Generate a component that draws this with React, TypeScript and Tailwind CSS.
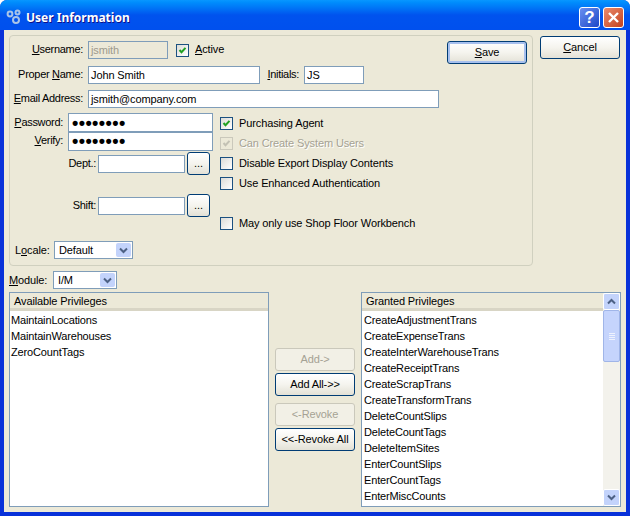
import React from 'react';

const AVAILABLE = ['MaintainLocations', 'MaintainWarehouses', 'ZeroCountTags'];
const GRANTED = [
  'CreateAdjustmentTrans',
  'CreateExpenseTrans',
  'CreateInterWarehouseTrans',
  'CreateReceiptTrans',
  'CreateScrapTrans',
  'CreateTransformTrans',
  'DeleteCountSlips',
  'DeleteCountTags',
  'DeleteItemSites',
  'EnterCountSlips',
  'EnterCountTags',
  'EnterMiscCounts',
];

const Check: React.FC<{ color?: string }> = ({ color = '#21a121' }) => (
  <svg width="11" height="11" viewBox="0 0 11 11" className="block">
    <path d="M2.5 5 L4.5 7.2 L8.5 2.8" fill="none" stroke={color} strokeWidth="2" />
  </svg>
);

const CheckBox: React.FC<{ checked?: boolean; disabled?: boolean }> = ({ checked, disabled }) => (
  <span
    className={`flex h-[13px] w-[13px] shrink-0 items-center justify-center border ${
      disabled ? 'border-[#cac8bb] bg-[#ece9d8]' : 'border-[#1c5180] bg-gradient-to-br from-[#dcdcd7] to-white'
    }`}
  >
    {checked && <Check color={disabled ? '#c3c1b4' : '#21a121'} />}
  </span>
);

const CheckRow: React.FC<{ label: React.ReactNode; checked?: boolean; disabled?: boolean; className?: string }> = ({
  label,
  checked,
  disabled,
  className = '',
}) => (
  <div className={`flex h-[14px] items-center gap-[6px] whitespace-nowrap ${className}`}>
    <CheckBox checked={checked} disabled={disabled} />
    <span className={disabled ? 'text-[#a5a294] [text-shadow:1px_1px_0_#fff]' : ''}>{label}</span>
  </div>
);

const Label: React.FC<{ children: React.ReactNode; className?: string }> = ({ children, className = '' }) => (
  <span className={`whitespace-nowrap pb-[1px] text-right tracking-[-0.3px] ${className}`}>{children}</span>
);

const Input: React.FC<{ value?: string; className?: string; disabled?: boolean }> = ({ value, className = '', disabled }) => (
  <div
    className={`flex h-[18px] items-center border border-[#7f9db9] pl-[2px] ${
      disabled ? 'bg-[#ece9d8] text-[#9c9a8e]' : 'bg-white'
    } ${className}`}
  >
    {value}
  </div>
);

const PasswordInput: React.FC = () => (
  <div className="flex h-[19px] w-[145px] items-center overflow-hidden border border-[#7f9db9] bg-white pl-[3px] text-[18px] font-bold leading-none tracking-[0.4px]">
    ••••••••
  </div>
);

const Button: React.FC<{ children: React.ReactNode; disabled?: boolean; className?: string }> = ({
  children,
  disabled,
  className = '',
}) => (
  <div
    className={`flex items-center justify-center rounded-[3px] border ${
      disabled
        ? 'border-[#cac8bb] bg-[#f2f0e6] text-[#a5a294]'
        : 'border-[#003c74] bg-gradient-to-b from-white via-[#f5f4ee] to-[#e3e1d6]'
    } ${className}`}
  >
    {children}
  </div>
);

const Chevron: React.FC<{ up?: boolean; size?: number }> = ({ up, size = 9 }) => (
  <svg width={size} height={size} viewBox="0 0 9 9" className="block">
    <path d={up ? 'M1 6.5 L4.5 3 L8 6.5' : 'M1 2.5 L4.5 6 L8 2.5'} fill="none" stroke="#4d6185" strokeWidth="2" />
  </svg>
);

const ComboBox: React.FC<{ value: string; className?: string }> = ({ value, className = '' }) => (
  <div className={`flex h-[18px] items-center justify-between border border-[#7f9db9] bg-white p-[1px] pl-[4px] ${className}`}>
    <span>{value}</span>
    <span className="flex h-[14px] w-[15px] items-center justify-center rounded-[2px] bg-[#c3d3fb]">
      <Chevron />
    </span>
  </div>
);

const ListBox: React.FC<{ title: string; items: string[]; scroll?: boolean; className?: string }> = ({
  title,
  items,
  scroll,
  className = '',
}) => (
  <div className={`flex h-[215px] w-[260px] shrink-0 overflow-hidden border border-[#7f9db9] bg-white ${className}`}>
    <div className="min-w-0 flex-1">
      <div className="flex h-[18px] items-center border-b-[3px] border-b-[#d8d5c5] bg-[#ece9d8] pl-[4px] pt-[2px]">{title}</div>
      <div className="pt-[1px]">
        {items.map((item) => (
          <div key={item} className={`flex h-[16px] items-center tracking-[-0.15px] ${scroll ? 'pl-[2px]' : 'pl-[1px]'}`}>
            {item}
          </div>
        ))}
      </div>
    </div>
    {scroll && (
      <div className="flex w-[17px] shrink-0 flex-col bg-[#f3f2ec]">
        <div className="flex h-[17px] items-center justify-center rounded-[2px] border border-white bg-[#c3d3fb]">
          <Chevron up />
        </div>
        <div className="flex h-[52px] flex-col items-center justify-center gap-[1px] rounded-[2px] border border-[#a0b5e8] bg-[#c5d4fc]">
          {[0, 1, 2, 3].map((n) => (
            <span key={n} className="h-[1px] w-[6px] bg-[#eef2fd]" />
          ))}
        </div>
        <div className="flex-1" />
        <div className="flex h-[17px] items-center justify-center rounded-[2px] border border-white bg-[#c3d3fb]">
          <Chevron />
        </div>
      </div>
    )}
  </div>
);

const App: React.FC = () => {
  return (
    <div className="flex h-[516px] w-[630px] flex-col overflow-hidden rounded-t-[7px] bg-[#0831d9] font-['Liberation_Sans',sans-serif] text-[11px] leading-none tracking-[-0.12px] text-black">
      <div className="flex h-[30px] shrink-0 items-center bg-gradient-to-b from-[#0997ff] via-[#0053ee] to-[#0050ee] pl-[6px] pr-[6px] pt-[4px]">
        <svg width="16" height="16" viewBox="0 0 16 16" className="mr-[4px] block">
          <g fill="none" stroke="#a9c4e8" strokeWidth="2">
            <circle cx="4" cy="5" r="2.4" />
            <circle cx="11.5" cy="3.5" r="2" />
            <circle cx="10" cy="11" r="3" />
          </g>
        </svg>
        <span className="flex-1 pt-[2px] font-['Noto_Sans',sans-serif] text-[12px] font-bold tracking-normal text-white [text-shadow:1px_1px_0_#0f1089]">
          User Information
        </span>
        <div className="mr-[3px] flex h-[21px] w-[21px] items-center justify-center rounded-[3px] border border-white bg-gradient-to-br from-[#6a8ff0] to-[#1d45c8] text-[17px] font-bold text-white">
          ?
        </div>
        <div className="flex h-[21px] w-[21px] items-center justify-center rounded-[3px] border border-white bg-gradient-to-br from-[#e98a6c] to-[#c4401a]">
          <svg width="13" height="13" viewBox="0 0 13 13" className="block">
            <path d="M2 2 L11 11 M11 2 L2 11" stroke="#fff" strokeWidth="2.4" />
          </svg>
        </div>
      </div>

      <div className="mx-[4px] mb-[4px] flex min-h-0 flex-1 flex-col bg-[#ece9d8] pl-[5px] pr-[5px] pt-[5px]">
        <div className="flex items-start">
          <div className="relative h-[231px] w-[524px] shrink-0 rounded-[4px] border border-[#d0d0bf] pt-[5px]">
            <Button className="absolute right-[5px] top-[5px] h-[23px] w-[80px] shadow-[inset_0_0_0_2px_#a7c0ee]">
              <span>
                <u>S</u>ave
              </span>
            </Button>

            <div className="flex h-[18px] items-center">
              <Label className="w-[73px]">
                <u>U</u>sername:
              </Label>
              <Input value="jsmith" disabled className="ml-[5px] w-[80px]" />
              <CheckRow checked label={<span className="block pb-[1px]"><u>A</u>ctive</span>} className="ml-[8px]" />
            </div>
            <div className="mt-[7px] flex h-[18px] items-center">
              <Label className="w-[73px]">
                Proper <u>N</u>ame:
              </Label>
              <Input value="John Smith" className="ml-[5px] w-[172px]" />
              <Label className="ml-[7px] w-[32px]">
                <u>I</u>nitials:
              </Label>
              <Input value="JS" className="ml-[5px] w-[60px]" />
            </div>
            <div className="mt-[6px] flex h-[18px] items-center">
              <Label className="w-[73px]">
                <u>E</u>mail Address:
              </Label>
              <Input value="jsmith@company.com" className="ml-[5px] w-[351px]" />
            </div>

            <div className="mt-[5px] flex items-start">
              <div className="w-[210px] shrink-0">
                <div className="flex h-[19px] items-center">
                  <Label className="w-[53px]">
                    <u>P</u>assword:
                  </Label>
                  <div className="ml-[5px]">
                    <PasswordInput />
                  </div>
                </div>
                <div className="flex h-[18px] items-center">
                  <Label className="w-[53px]">
                    <u>V</u>erify:
                  </Label>
                  <div className="ml-[5px]">
                    <PasswordInput />
                  </div>
                </div>
                <div className="mt-[2px] flex h-[23px] items-center">
                  <Label className="w-[86px]">Dept.:</Label>
                  <Input className="ml-[2px] w-[87px]" />
                  <Button className="ml-[2px] h-[23px] w-[23px]">...</Button>
                </div>
                <div className="mt-[19px] flex h-[23px] items-center">
                  <Label className="w-[86px]">Shift:</Label>
                  <Input className="ml-[2px] w-[87px]" />
                  <Button className="ml-[2px] h-[23px] w-[23px]">...</Button>
                </div>
              </div>
              <div className="flex flex-col pt-[3px]">
                <CheckRow checked label="Purchasing Agent" />
                <CheckRow checked disabled label="Can Create System Users" className="mt-[6px]" />
                <CheckRow label="Disable Export Display Contents" className="mt-[6px]" />
                <CheckRow label="Use Enhanced Authentication" className="mt-[6px]" />
                <CheckRow label="May only use Shop Floor Workbench" className="mt-[26px]" />
              </div>
            </div>

            <div className="mt-[11px] flex h-[18px] items-center pl-[5px]">
              <span className="w-[34px] whitespace-nowrap">
                L<u>o</u>cale:
              </span>
              <ComboBox value="Default" className="ml-[5px] w-[79px]" />
            </div>
          </div>
          <Button className="ml-[7px] mt-[1px] h-[23px] w-[80px]">
            <span>
              <u>C</u>ancel
            </span>
          </Button>
        </div>

        <div className="mt-[5px] flex h-[18px] items-center">
          <span className="w-[39px] whitespace-nowrap">
            <u>M</u>odule:
          </span>
          <ComboBox value="I/M" className="ml-[5px] w-[64px]" />
        </div>

        <div className="mt-[3px] flex items-start">
          <ListBox title="Available Privileges" items={AVAILABLE} />
          <div className="flex w-[92px] shrink-0 flex-col items-center pt-[56px]">
            <Button disabled className="h-[23px] w-[80px]">Add-&gt;</Button>
            <Button className="mt-[2px] h-[23px] w-[80px]">Add All-&gt;&gt;</Button>
            <Button disabled className="mt-[7px] h-[23px] w-[80px]">&lt;-Revoke</Button>
            <Button className="mt-[2px] h-[23px] w-[80px]">&lt;&lt;-Revoke All</Button>
          </div>
          <ListBox title="Granted Privileges" items={GRANTED} scroll />
        </div>
      </div>
    </div>
  );
};

export default App;
